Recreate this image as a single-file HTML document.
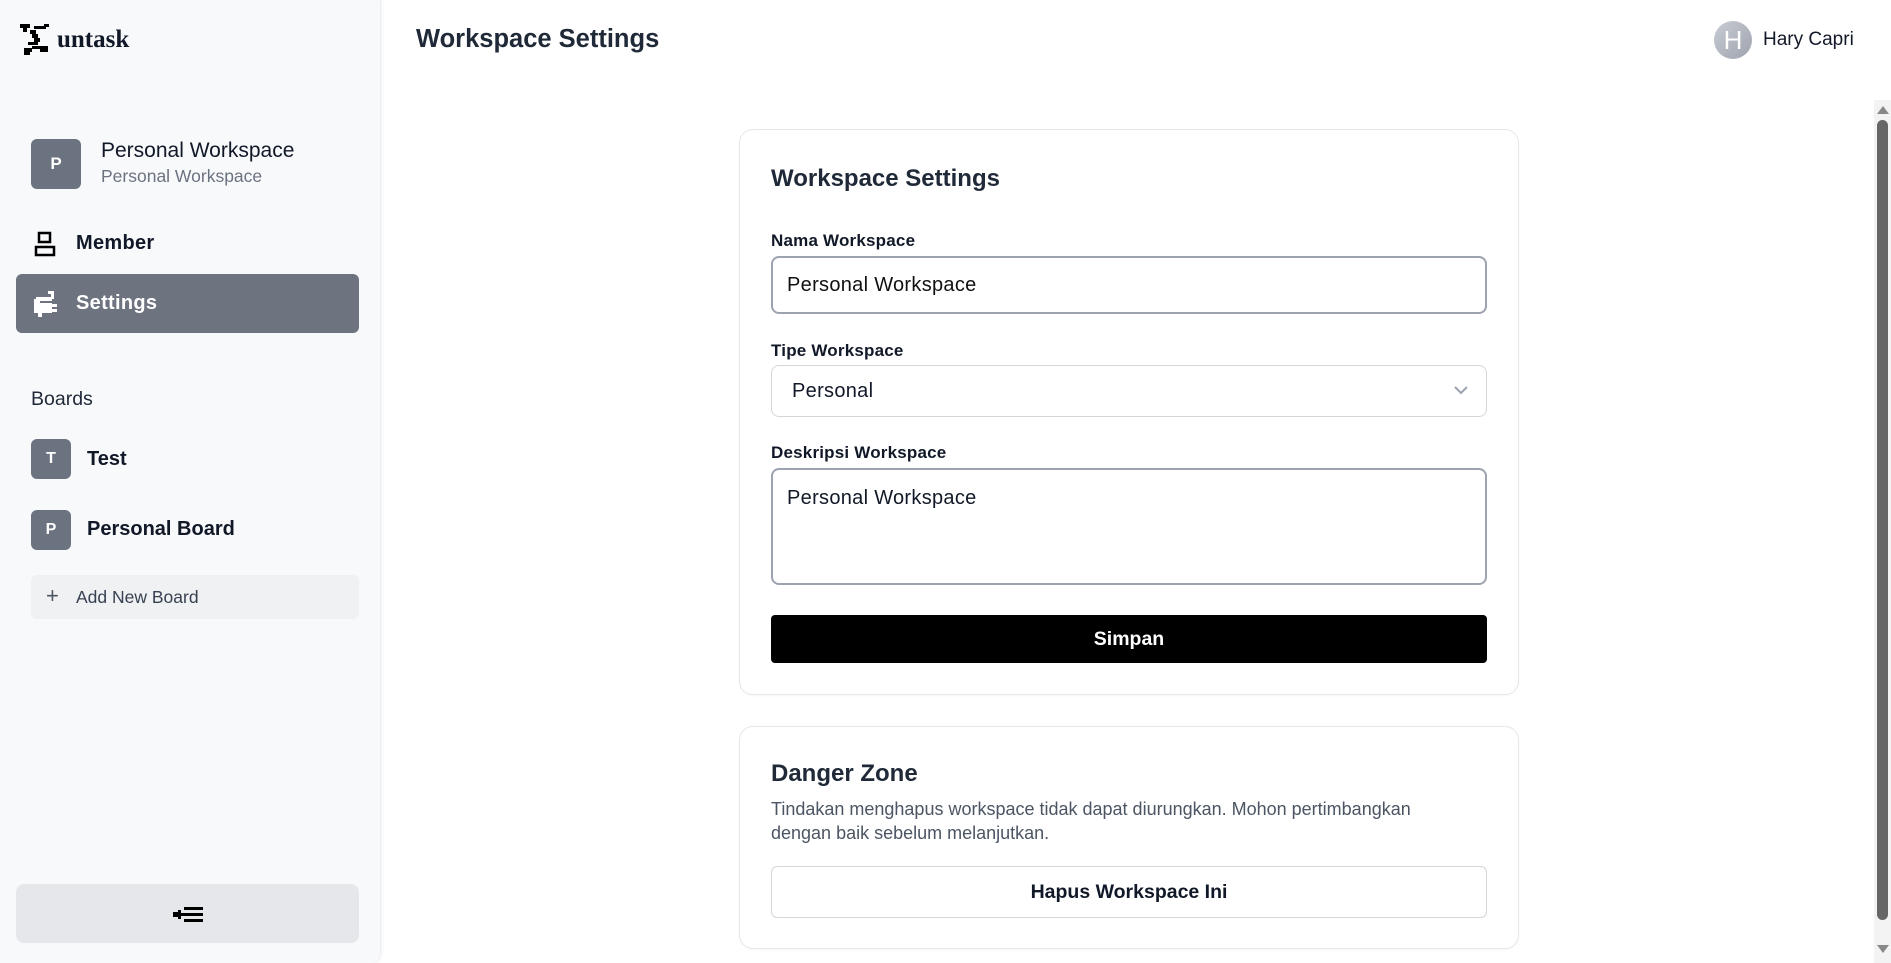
<!DOCTYPE html>
<html><head><meta charset="utf-8"><style>
*{box-sizing:border-box;margin:0;padding:0}
body{width:1891px;height:963px;overflow:hidden;background:#fff;font-family:"Liberation Sans",sans-serif;color:#111827;position:relative}
.a{position:absolute}
.side{left:0;top:0;width:381px;height:963px;background:#f8f9fb;border-right:1px solid #eceef1;box-shadow:1px 0 4px rgba(0,0,0,.05);border-bottom-right-radius:10px}
.av{background:#6b7280;color:#fff;font-weight:bold;border-radius:6px;display:flex;align-items:center;justify-content:center}
.card{border:1px solid #e5e7eb;border-radius:14px;background:#fff;box-shadow:0 1px 2px rgba(0,0,0,.03)}
.lbl{font-weight:bold;font-size:17px;color:#111827;letter-spacing:.2px}
.fld{left:771px;width:716px;border-radius:8px;font-size:20px;padding-left:14px;display:flex;align-items:center;letter-spacing:.3px}
</style></head><body>
<div class="a side"></div>
<svg class="a" style="left:20px;top:24px" width="32" height="32" viewBox="0 0 32 32" fill="#000"><rect x="0" y="0" width="10" height="4"/><rect x="3" y="4" width="4" height="4"/><rect x="14" y="2" width="12" height="3"/><rect x="24" y="0" width="5" height="3"/><rect x="10" y="6" width="6" height="4"/><rect x="12" y="10" width="6" height="4"/><rect x="14" y="14" width="6" height="4"/><rect x="8" y="18" width="10" height="3"/><rect x="4" y="24" width="8" height="4"/><rect x="12" y="22" width="16" height="3"/><rect x="20" y="25" width="8" height="3"/><rect x="4" y="28" width="6" height="3"/></svg>
<div class="a" style="left:57px;top:26px;font-family:'Liberation Serif',serif;font-weight:bold;font-size:25px">untask</div>
<div class="a av" style="left:31px;top:139px;width:50px;height:50px;font-size:17px">P</div>
<div class="a" style="left:101px;top:139px;font-size:21px;color:#111827">Personal Workspace</div>
<div class="a" style="left:101px;top:166px;font-size:17.5px;color:#6b7280">Personal Workspace</div>
<svg class="a" style="left:34px;top:231px" width="22" height="26" viewBox="0 0 22 26" fill="none" stroke="#000" stroke-width="2.5"><rect x="5" y="2" width="11" height="9"/><rect x="2" y="16" width="18" height="8"/></svg>
<div class="a" style="left:76px;top:232px;font-size:20px;font-weight:bold;letter-spacing:.3px">Member</div>
<div class="a" style="left:16px;top:274px;width:343px;height:59px;background:#6e7380;border-radius:6px"></div>
<svg class="a" style="left:34px;top:291px" width="24" height="26" viewBox="0 0 24 26" fill="#fff"><rect x="14" y="0" width="6" height="3"/><rect x="17" y="0" width="3" height="8"/><rect x="2" y="6" width="16" height="4"/><rect x="0" y="8" width="6" height="14"/><rect x="6" y="12" width="12" height="10"/><rect x="18" y="13" width="5" height="3"/><rect x="18" y="18" width="5" height="3"/><rect x="4" y="22" width="4" height="4"/></svg>
<div class="a" style="left:76px;top:292px;font-size:20px;font-weight:bold;color:#fff;letter-spacing:.3px">Settings</div>
<div class="a" style="left:31px;top:388px;font-size:19.5px;color:#1f2937">Boards</div>
<div class="a av" style="left:31px;top:439px;width:40px;height:40px;font-size:16px">T</div>
<div class="a" style="left:87px;top:448px;font-size:20px;font-weight:bold">Test</div>
<div class="a av" style="left:31px;top:510px;width:40px;height:40px;font-size:16px">P</div>
<div class="a" style="left:87px;top:518px;font-size:20px;font-weight:bold">Personal Board</div>
<div class="a" style="left:31px;top:575px;width:328px;height:44px;background:#f0f1f3;border-radius:6px"></div>
<div class="a" style="left:46px;top:583px;font-size:22px;color:#4b5563">+</div>
<div class="a" style="left:76px;top:587px;font-size:17.5px;color:#374151">Add New Board</div>
<div class="a" style="left:16px;top:884px;width:343px;height:59px;background:#e5e7eb;border-radius:8px"></div>
<svg class="a" style="left:173px;top:905px" width="32" height="18" viewBox="0 0 32 18" fill="#000"><rect x="11" y="2" width="19" height="3"/><rect x="11" y="8" width="19" height="3"/><rect x="11" y="14" width="19" height="3"/><rect x="3" y="8" width="8" height="3"/><rect x="5" y="5" width="3" height="9"/><rect x="0" y="7" width="5" height="5"/></svg>
<div class="a" style="left:416px;top:25px;font-size:25.5px;font-weight:bold;color:#1f2937">Workspace Settings</div>
<div class="a" style="left:1714px;top:21px;width:38px;height:38px;border-radius:50%;background:linear-gradient(135deg,#c9ccd3,#9ea3ae);color:#fff;font-size:26px;display:flex;align-items:center;justify-content:center">H</div>
<div class="a" style="left:1763px;top:29px;font-size:19px;color:#111827">Hary Capri</div>
<div class="a card" style="left:739px;top:129px;width:780px;height:566px"></div>
<div class="a" style="left:771px;top:165px;font-size:24px;font-weight:bold;color:#1f2937">Workspace Settings</div>
<div class="a lbl" style="left:771px;top:231px">Nama Workspace</div>
<div class="a fld" style="top:256px;height:58px;border:2px solid #9ca3af;color:#111">Personal Workspace</div>
<div class="a lbl" style="left:771px;top:341px">Tipe Workspace</div>
<div class="a fld" style="top:365px;height:52px;border:1px solid #d4d6dc;padding-left:20px">Personal</div>
<svg class="a" style="left:1453px;top:385px" width="16" height="10" viewBox="0 0 16 10" fill="none" stroke="#9ca3af" stroke-width="2"><path d="M2 2l6 6 6-6"/></svg>
<div class="a lbl" style="left:771px;top:443px">Deskripsi Workspace</div>
<div class="a fld" style="top:468px;height:117px;border:2px solid #9ca3af;align-items:flex-start;padding-top:17px">Personal Workspace</div>
<div class="a" style="left:771px;top:615px;width:716px;height:48px;background:#000;border-radius:4px;color:#fff;font-weight:bold;font-size:19.5px;display:flex;align-items:center;justify-content:center">Simpan</div>
<div class="a card" style="left:739px;top:726px;width:780px;height:223px"></div>
<div class="a" style="left:771px;top:760px;font-size:24px;font-weight:bold;color:#1f2937">Danger Zone</div>
<div class="a" style="left:771px;top:797px;width:680px;font-size:18px;line-height:24px;color:#4b5563">Tindakan menghapus workspace tidak dapat diurungkan. Mohon pertimbangkan dengan baik sebelum melanjutkan.</div>
<div class="a" style="left:771px;top:866px;width:716px;height:52px;border:1px solid #d4d6dc;border-radius:6px;font-weight:bold;font-size:19.5px;display:flex;align-items:center;justify-content:center">Hapus Workspace Ini</div>
<div class="a" style="left:1874px;top:100px;width:17px;height:863px;background:#f3f3f3"></div>
<div class="a" style="left:1877px;top:106px;width:0;height:0;border-left:6px solid transparent;border-right:6px solid transparent;border-bottom:8px solid #888"></div>
<div class="a" style="left:1877px;top:120px;width:11px;height:800px;background:#666;border-radius:6px"></div>
<div class="a" style="left:1877px;top:945px;width:0;height:0;border-left:6px solid transparent;border-right:6px solid transparent;border-top:8px solid #888"></div>
</body></html>
